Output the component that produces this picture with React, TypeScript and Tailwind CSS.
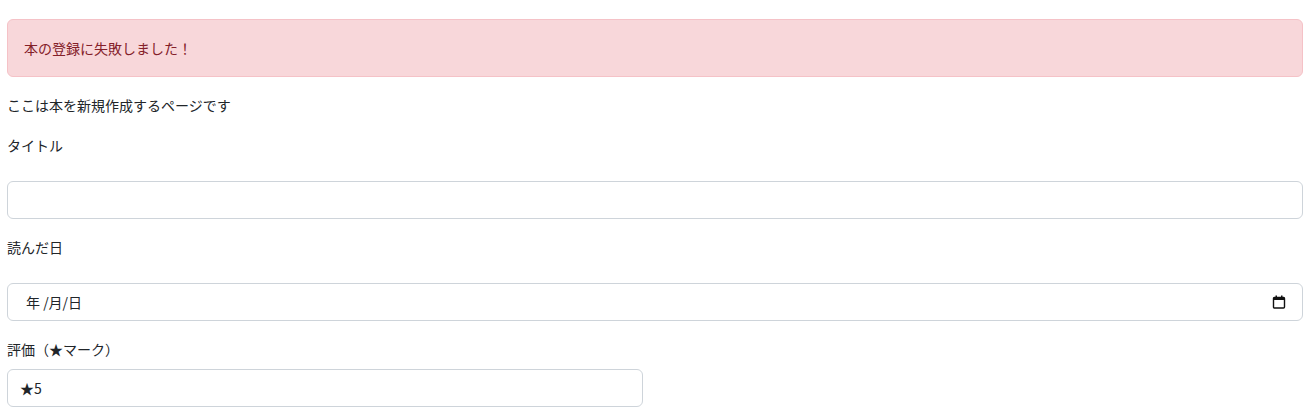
const FONT = "font-['Noto_Sans_CJK_JP','Noto_Sans',sans-serif]";

function CalendarIcon() {
  return (
    <svg width="14" height="14" viewBox="0 0 14 14" className="text-[#111]">
      <rect x="1.5" y="2.5" width="11" height="10.5" rx="1" fill="none" stroke="currentColor" strokeWidth="1.4" />
      <rect x="1.5" y="2.5" width="11" height="2.5" fill="currentColor" />
      <rect x="3.5" y="0.5" width="1.5" height="3" fill="currentColor" />
      <rect x="9" y="0.5" width="1.5" height="3" fill="currentColor" />
    </svg>
  );
}

export default function App() {
  return (
    <div className={`${FONT} min-h-[418px] bg-white text-[14px] leading-6 text-[#212529]`}>
      <div className="w-[1303px] pl-[7px] pt-[19px]">
        <div className="mb-4 rounded-md border border-[#f5c2c7] bg-[#f8d7da] px-4 py-4 text-[#842029]">
          本の登録に失敗しました！
        </div>
        <p className="mb-4">ここは本を新規作成するページです</p>

        <label className="mb-6 block">タイトル</label>
        <input
          type="text"
          className="mb-4 block h-[38px] w-full rounded-md border border-[#ced4da] px-3 outline-none"
        />

        <label className="mb-6 block">読んだ日</label>
        <div className="mb-4 flex h-[38px] w-full items-center justify-between rounded-md border border-[#ced4da] pl-[18px] pr-[16px]">
          <span>年 /月/日</span>
          <CalendarIcon />
        </div>

        <label className="mb-2 block">評価（★マーク）</label>
        <input
          type="text"
          defaultValue="★5"
          className="block h-[38px] w-[636px] rounded-md border border-[#ced4da] px-3 outline-none"
        />
      </div>
    </div>
  );
}
